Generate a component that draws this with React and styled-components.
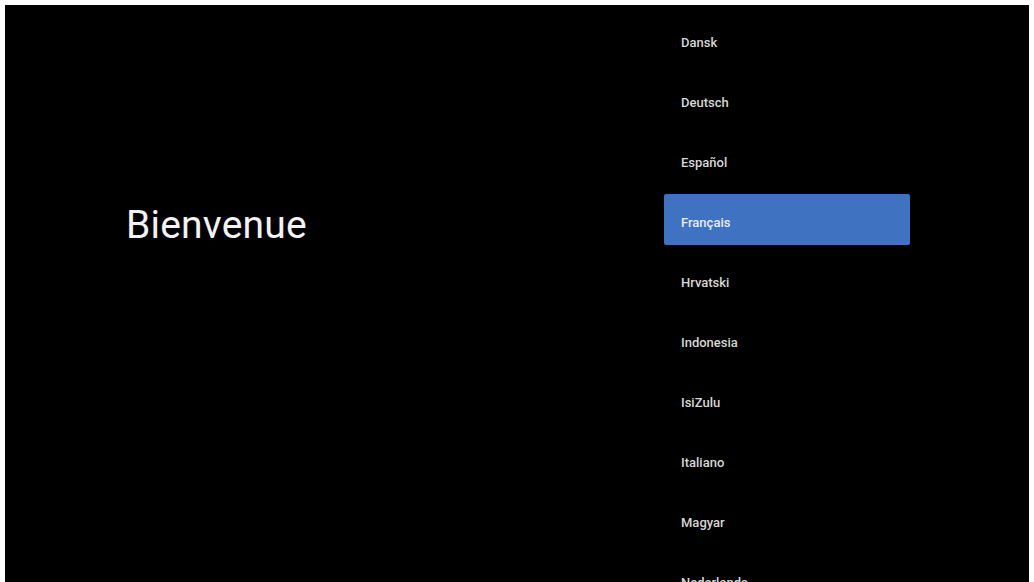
import React from 'react'
import styled, { createGlobalStyle } from 'styled-components'

const languages = [
  'Dansk',
  'Deutsch',
  'Español',
  'Français',
  'Hrvatski',
  'Indonesia',
  'IsiZulu',
  'Italiano',
  'Magyar',
  'Nederlands',
]

const GlobalStyle = createGlobalStyle`
  html, body {
    margin: 0;
    padding: 0;
    background: #fff;
    overflow: hidden;
  }
  * {
    box-sizing: border-box;
  }
`

const Frame = styled.div`
  padding: 5px 5px 0 5px;
  height: 582px;
`

const Screen = styled.main`
  height: 577px;
  background: #000;
  display: grid;
  grid-template-columns: 659px 1fr;
  grid-template-rows: 100%;
  overflow: hidden;
`

const Welcome = styled.section`
  display: flex;
  align-items: center;
  padding: 0 0 138px 121px;
  h1 {
    margin: 0;
    font-family: Roboto, 'Liberation Sans', sans-serif;
    font-weight: 400;
    font-size: 39px;
    letter-spacing: 0.2px;
    color: #f2f2f2;
  }
`

const List = styled.ul`
  list-style: none;
  margin: 0;
  padding: 9px 0 0 0;
  display: flex;
  flex-direction: column;
  gap: 9px;
  width: 246px;
`

const Item = styled.li`
  height: 51px;
  flex-shrink: 0;
  display: flex;
  align-items: center;
  padding: 5px 0 0 17px;
  font-family: Roboto, 'Liberation Sans', sans-serif;
  font-weight: 500;
  font-size: 13px;
  color: ${(p) => (p.selected ? '#e8eef8' : '#d6d6d6')};
  background: ${(p) => (p.selected ? '#3f72c0' : 'transparent')};
  border-radius: 2px;
`

export default function App() {
  return (
    <>
      <GlobalStyle />
      <Frame>
        <Screen>
          <Welcome>
            <h1>Bienvenue</h1>
          </Welcome>
          <List>
            {languages.map((lang) => (
              <Item key={lang} selected={lang === 'Français'}>
                {lang}
              </Item>
            ))}
          </List>
        </Screen>
      </Frame>
    </>
  )
}
